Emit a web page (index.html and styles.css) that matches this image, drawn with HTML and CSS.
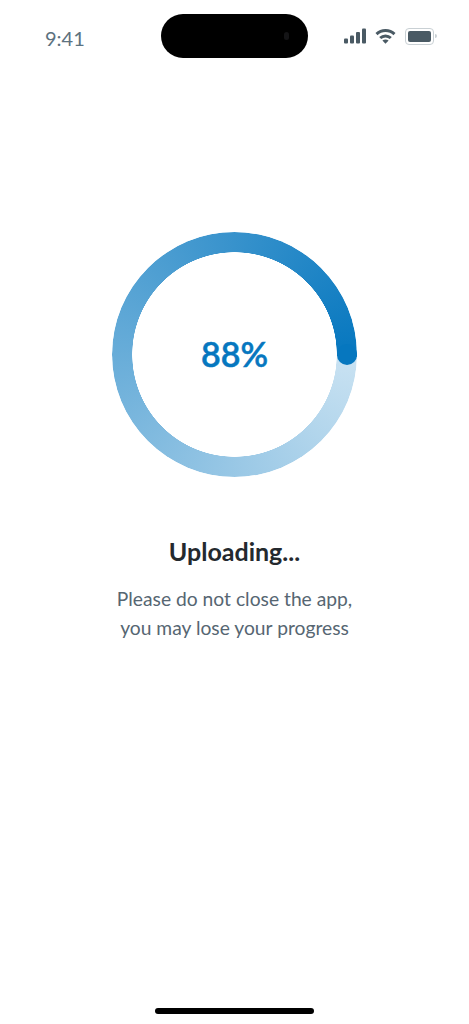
FILE: index.html
```html
<!DOCTYPE html>
<html lang="en">
<head>
    <meta charset="UTF-8">
    <meta name="viewport" content="width=device-width, initial-scale=1.0">
    <title>Uploading</title>
    <link rel="stylesheet" href="styles.css">
</head>
<body>

    <div class="pantalla">
        <div class="status-bar">
            <span class="hora">9:41</span>
            <div class="isla"><span class="camara"></span></div>
            <div class="status-iconos">
                <svg width="23" height="16" viewBox="0 0 23 16" fill="#4a5a64">
                    <rect x="1" y="10.5" width="4" height="5" rx="1"/>
                    <rect x="7" y="7.5" width="4" height="8" rx="1"/>
                    <rect x="13" y="4" width="4" height="11.5" rx="1"/>
                    <rect x="19" y="0.5" width="4" height="15" rx="1"/>
                </svg>
                <svg width="21" height="15" viewBox="0 0 21 15" fill="none" stroke="#4a5a64" stroke-width="3">
                    <path d="M1.500 5.200C6.500 .4 14.500 .4 19.500 5.200"/>
                    <path d="M5.200 9C8.200 6.200 12.800 6.200 15.800 9"/>
                    <path d="M10.500 14.800l3.100-3.300c-1.800-1.500-4.400-1.500-6.200 0z" fill="#4a5a64" stroke="none"/>
                </svg>
                <div class="bateria">
                    <div class="bateria-carga"></div>
                </div>
                <span class="bateria-punta"></span>
            </div>
        </div>

        <div class="progreso">
            <div class="anillo"></div>
            <span class="anillo-punta"></span>
            <span class="porcentaje">88%</span>
        </div>

        <div class="titulo">Uploading...</div>
        <div class="mensaje">Please do not close the app,<br>you may lose your progress</div>

        <div class="home-bar"></div>
    </div>

</body>
</html>
```

FILE: styles.css
```css
body {
    margin: 0;
    background-color: #ffffff;
    font-family: Lato, "Open Sans", sans-serif;
}

.pantalla {
    height: 100vh;
    display: flex;
    flex-direction: column;
    align-items: center;
    overflow: hidden;
}

.status-bar {
    width: 100%;
    box-sizing: border-box;
    display: flex;
    align-items: center;
    padding: 14px 0 0 45px;
}

.hora {
    font-size: 20px;
    color: #5d7280;
    width: 39px;
    padding-top: 3px;
}

.isla {
    width: 147px;
    height: 44px;
    margin-left: 77px;
    border-radius: 22px;
    background-color: #000000;
    position: relative;
}

.camara {
    position: absolute;
    left: 123px;
    top: 18px;
    width: 5px;
    height: 8px;
    border-radius: 3px;
    background-color: #141416;
}

.status-iconos {
    display: flex;
    align-items: center;
    gap: 9px;
    margin-left: 35px;
    position: relative;
}

.bateria {
    width: 23px;
    height: 11px;
    padding: 2px;
    border: 1px solid #c9d0d4;
    border-radius: 4px;
}

.bateria-carga {
    height: 100%;
    background-color: #4a5a64;
    border-radius: 2px;
}

.bateria-punta {
    position: absolute;
    right: -3px;
    top: 6px;
    width: 2px;
    height: 4px;
    border-radius: 0 2px 2px 0;
    background-color: #c9d0d4;
}

.progreso {
    position: relative;
    width: 245px;
    height: 245px;
    margin-top: 174px;
    display: flex;
    align-items: center;
    justify-content: center;
}

.anillo {
    position: absolute;
    inset: 0;
    border-radius: 50%;
    background: conic-gradient(from 91deg, #c9e2f2, #0677bf);
    -webkit-mask: radial-gradient(circle, transparent 102px, #000 102.5px);
    mask: radial-gradient(circle, transparent 102px, #000 102.5px);
}

.anillo-punta {
    position: absolute;
    right: 0;
    top: 112px;
    width: 20.500px;
    height: 20.500px;
    border-radius: 50%;
    background-color: #0677bf;
}

.porcentaje {
    position: relative;
    top: -1px;
    font-size: 34px;
    font-weight: 600;
    -webkit-text-stroke: 0.5px #0677bf;
    color: #0677bf;
}

.titulo {
    margin-top: 59px;
    font-size: 25px;
    font-weight: 700;
    color: #24292e;
}

.mensaje {
    margin-top: 18px;
    font-size: 19.250px;
    line-height: 29px;
    text-align: center;
    color: #566672;
}

.home-bar {
    width: 159px;
    height: 6px;
    margin-top: auto;
    margin-bottom: 10px;
    border-radius: 3px;
    background-color: #000000;
}
```
